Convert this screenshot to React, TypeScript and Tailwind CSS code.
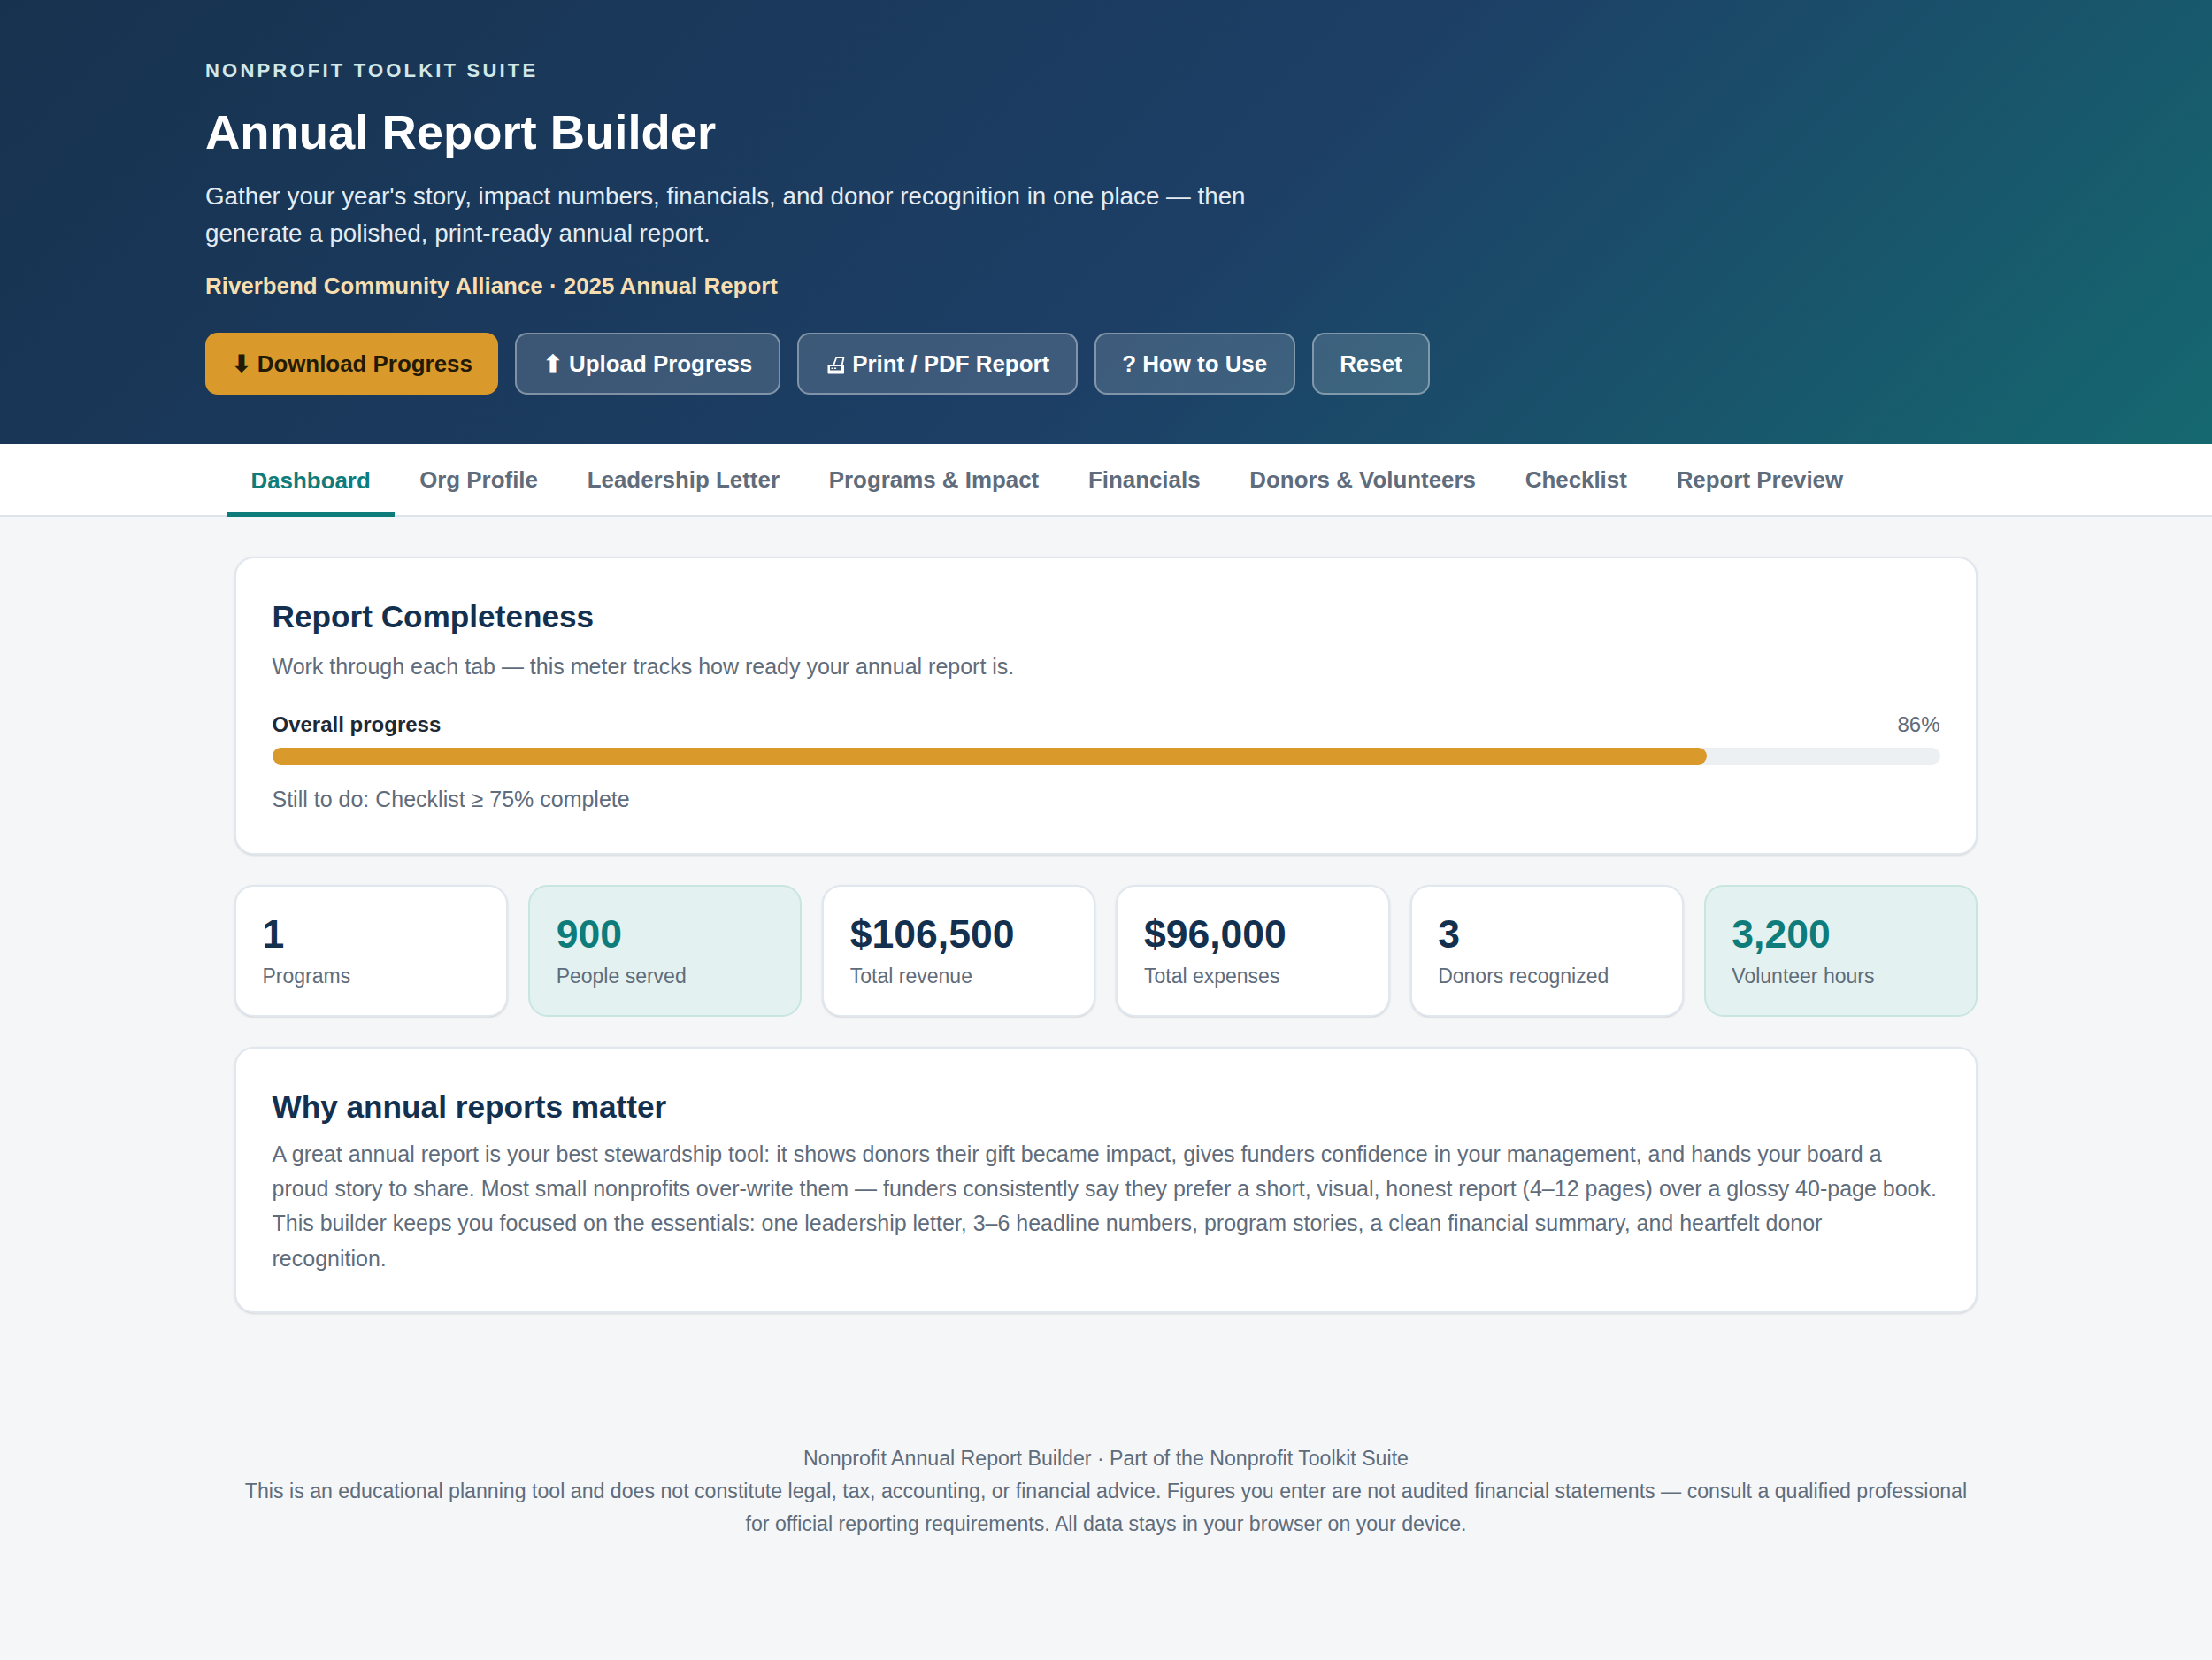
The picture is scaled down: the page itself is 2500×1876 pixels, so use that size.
const tabs = ["Dashboard","Org Profile","Leadership Letter","Programs & Impact","Financials","Donors & Volunteers","Checklist","Report Preview"];
const stats = [
  { v: "1", l: "Programs", a: false },
  { v: "900", l: "People served", a: true },
  { v: "$106,500", l: "Total revenue", a: false },
  { v: "$96,000", l: "Total expenses", a: false },
  { v: "3", l: "Donors recognized", a: false },
  { v: "3,200", l: "Volunteer hours", a: true },
];
const ghostClass = "inline-flex h-[70px] items-center rounded-[14px] border-2 border-white/35 bg-white/15 px-[29.5px] pt-[1px] text-[25.9px] font-bold text-white";

function PrinterGlyph() {
  return (
    <svg className="mt-[3px] mr-[7px] h-[30px] w-[24px]" viewBox="2.5 0 24 30" aria-hidden="true">
      <path d="M12.8 14 L15.8 6 H24 L22.2 14" fill="none" stroke="#fff" strokeWidth="1.8" strokeLinejoin="round" />
      <rect x="6" y="14" width="18.5" height="10.5" rx="1" fill="#fff" />
      <rect x="8.5" y="16" width="13" height="4.5" fill="#3a5672" />
      <rect x="10" y="17.5" width="2.2" height="1.5" fill="#fff" />
      <rect x="13.4" y="17.5" width="2.2" height="1.5" fill="#fff" />
    </svg>
  );
}

export default function App() {
  return (
    <div className="min-h-[1876px] bg-[#f4f6f8] font-['Liberation_Sans',Arial,sans-serif]">
      <header className="h-[502px] bg-[linear-gradient(135deg,#17324f_0%,#1d3f66_55%,#156870_100%)] pl-[232px] pt-[66px]">
        <p className="pt-[1px] text-[22px] leading-[26px] font-bold tracking-[3.2px] text-[#d2e8e8]">NONPROFIT TOOLKIT SUITE</p>
        <h1 className="mt-[24px] text-[54.4px] leading-[66px] font-bold text-white">Annual Report Builder</h1>
        <p className="mt-[17.5px] w-[1220px] text-[27.75px] leading-[42.5px] text-[#e3ecf2]">Gather your year's story, impact numbers, financials, and donor recognition in one place — then generate a polished, print-ready annual report.</p>
        <p className="mt-[22px] text-[25.9px] leading-[30px] font-bold text-[#f6deb0]">Riverbend Community Alliance · 2025 Annual Report</p>
        <div className="mt-[38px] flex gap-[19px]">
          <button className="h-[70px] rounded-[14px] bg-[#d99a2b] px-[29.5px] pt-[1px] text-[25.9px] font-bold text-[#231a05]">⬇ Download Progress</button>
          <button className={ghostClass}>⬆ Upload Progress</button>
          <button className={ghostClass}><PrinterGlyph />Print / PDF Report</button>
          <button className={ghostClass}>? How to Use</button>
          <button className={ghostClass}>Reset</button>
        </div>
      </header>
      <nav className="flex h-[82px] border-b-2 border-[#dfe5ec] bg-white pl-[257px]">
        {tabs.map((t, i) => (
          <div key={t} className={i === 0 ? "flex items-center border-b-[5px] border-[#0e7c7b] pl-[26.5px] pr-[27.5px] pt-[6px] text-[25.9px] font-bold text-[#0e7c7b] -mb-[2px]" : "flex items-center px-[27.9px] pt-[1px] text-[25.9px] font-bold text-[#5f6c7b]"}>{t}</div>
        ))}
      </nav>
      <main className="mx-auto flex w-[1970px] flex-col gap-[34px] pt-[45px]">
        <section className="h-[337px] rounded-[22px] border-2 border-[#e1e7ee] bg-white px-[40.5px] pt-[44px] shadow-sm">
          <h2 className="text-[35.2px] leading-[44px] font-bold text-[#14304f]">Report Completeness</h2>
          <p className="mt-[14px] text-[25px] leading-[40px] text-[#5f6c7b]">Work through each tab — this meter tracks how ready your annual report is.</p>
          <div className="mt-[27.5px] flex justify-between text-[24px] leading-[36px]">
            <span className="font-bold text-[#1f2933]">Overall progress</span>
            <span className="text-[#5f6c7b]">86%</span>
          </div>
          <div className="mt-[8px] h-[19px] rounded-full bg-[#edf0f3]">
            <div className="h-full w-[86%] rounded-full bg-[#d99a2b]"></div>
          </div>
          <p className="mt-[19px] text-[25px] leading-[40px] text-[#5f6c7b]">Still to do: Checklist ≥ 75% complete</p>
        </section>
        <div className="grid grid-cols-6 gap-[23px]">
          {stats.map(s => (
            <div key={s.l} className={s.a ? "h-[149px] rounded-[22px] border-2 border-[#c8e5e0] bg-[#e3f1f0] pl-[29.5px] pt-[28px]" : "h-[149px] rounded-[22px] border-2 border-[#e1e7ee] bg-white pl-[29.5px] pt-[28px] shadow-sm"}>
              <div className={s.a ? "text-[44.5px] leading-[52px] font-bold text-[#0e7c7b]" : "text-[44.5px] leading-[52px] font-bold text-[#14304f]"}>{s.v}</div>
              <div className="mt-[4px] text-[23px] leading-[34px] text-[#5f6c7b]">{s.l}</div>
            </div>
          ))}
        </div>
        <section className="h-[301px] rounded-[22px] border-2 border-[#e1e7ee] bg-white px-[40.5px] pt-[44px] shadow-sm">
          <h2 className="text-[35.2px] leading-[44px] font-bold text-[#14304f]">Why annual reports matter</h2>
          <p className="mt-[12px] text-[25px] leading-[39.2px] text-[#5f6c7b]">A great annual report is your best stewardship tool: it shows donors their gift became impact, gives funders confidence in your management, and hands your board a proud story to share. Most small nonprofits over-write them — funders consistently say they prefer a short, visual, honest report (4–12 pages) over a glossy 40-page book. This builder keeps you focused on the essentials: one leadership letter, 3–6 headline numbers, program stories, a clean financial summary, and heartfelt donor recognition.</p>
        </section>
      </main>
      <footer className="mx-auto mt-[146px] w-[1970px] text-center text-[23.15px] leading-[37px] text-[#5f6c7b]">
        <p>Nonprofit Annual Report Builder · Part of the Nonprofit Toolkit Suite</p>
        <p>This is an educational planning tool and does not constitute legal, tax, accounting, or financial advice. Figures you enter are not audited financial statements — consult a qualified professional for official reporting requirements. All data stays in your browser on your device.</p>
      </footer>
    </div>
  );
}
